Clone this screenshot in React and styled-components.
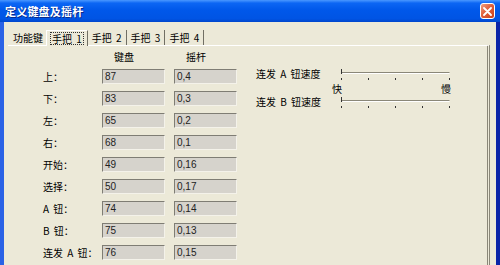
import React from 'react'
import styled, { createGlobalStyle } from 'styled-components'

const GlobalStyle = createGlobalStyle`
  html, body {
    margin: 0;
    padding: 0;
    width: 500px;
    height: 265px;
    overflow: hidden;
    background: #ECE9D8;
  }
  body {
    font-family: "Liberation Sans", "Noto Sans CJK SC", sans-serif;
    font-size: 10px;
    color: #000;
  }
`

// Styles
const Window = styled.div`
  width: 500px;
  height: 265px;
  display: flex;
  flex-direction: column;
  overflow: hidden;
`
const TitleBar = styled.div`
  height: 22px;
  flex: none;
  display: flex;
  align-items: center;
  padding-left: 5px;
  background: linear-gradient(#4A98FF 0%, #0C66F4 14%, #0058EA 45%, #0054E4 85%, #0046CC 100%);
`
const Title = styled.span`
  color: #fff;
  font-family: "Noto Sans CJK SC", sans-serif;
  font-size: 11px;
  font-weight: 700;
  letter-spacing: 0.2px;
  text-shadow: 1px 1px #0A2A8A;
`
const CloseButton = styled.div`
  margin-left: auto;
  margin-right: 5px;
  width: 15px;
  height: 16px;
  box-sizing: border-box;
  border: 1px solid #fff;
  border-radius: 3px;
  background: linear-gradient(135deg, #F0A080 0%, #E0603C 45%, #C8401C 100%);
  display: flex;
  align-items: center;
  justify-content: center;
`
const Frame = styled.div`
  flex: 1;
  display: flex;
  flex-direction: column;
  background: #ECE9D8;
  border-left: 4px solid #2A62E6;
  border-right: 4px solid #0A24A8;
  padding: 8px 6px 0 4px;
  min-height: 0;
`
const TabStrip = styled.div`
  display: flex;
  height: 15px;
  padding-left: 2px;
  position: relative;
  z-index: 1;
`
const Tab = styled.div`
  box-sizing: border-box;
  height: ${p => (p.$active ? '16px' : '15px')};
  padding: 0 ${p => (p.$plain ? '3px' : '4px')};
  display: flex;
  align-items: center;
  font-family: "Noto Sans CJK SC", sans-serif;
  font-size: 10px;
  white-space: pre;
  word-spacing: 2px;
  background: #ECE9D8;
  border-right: ${p => (p.$plain ? 'none' : '1px solid #716F64')};
  border-left: ${p => (p.$active ? '1px solid #fff' : 'none')};
  border-top: ${p => (p.$active ? '1px solid #fff' : 'none')};
`
const FocusBox = styled.span`
  outline: 1px dotted #333;
  padding: 0 1px;
  line-height: 11px;
`
const Panel = styled.div`
  flex: 1;
  display: flex;
  align-items: flex-start;
  border-top: 1px solid #fff;
  border-right: 3px double #8A8778;
  padding-left: 35px;
`
const KeyGrid = styled.div`
  margin-top: 4px;
  display: grid;
  grid-template-columns: 50px 63px 63px;
  grid-template-rows: 15px;
  grid-auto-rows: 22px;
  column-gap: 9px;
  align-items: center;
`
const ColHead = styled.div`
  padding-left: 12px;
  font-family: "Noto Sans CJK SC", sans-serif;
  font-size: 10px;
  align-self: start;
  line-height: 13px;
`
const KeyLabel = styled.div`
  font-family: "Noto Sans CJK SC", sans-serif;
  font-size: 10px;
  white-space: pre;
  word-spacing: 2px;
`
const Field = styled.div`
  height: 15px;
  box-sizing: border-box;
  border: 1px solid;
  border-color: #7F7D74 #F4F2EA #F4F2EA #7F7D74;
  background: #D6D3CC;
  padding-left: 2px;
  font-family: "Liberation Sans", sans-serif;
  font-size: 10px;
  line-height: 13px;
  color: #222;
`
const SpeedColumn = styled.div`
  margin-top: 20px;
  margin-left: 19px;
  display: flex;
  flex-direction: column;
`
const SpeedRow = styled.div`
  height: 16px;
  display: flex;
  align-items: flex-start;
`
const SpeedLabel = styled.div`
  width: 85px;
  line-height: 16px;
  font-family: "Noto Sans CJK SC", sans-serif;
  font-size: 10px;
  white-space: pre;
  word-spacing: 2px;
`
const ScaleRow = styled.div`
  height: 12px;
  width: 119px;
  margin-left: 76px;
  display: flex;
  justify-content: space-between;
  align-items: center;
  font-family: "Noto Sans CJK SC", sans-serif;
  font-size: 10px;
`

const rows = [
  ['上：', '87', '0,4'],
  ['下：', '83', '0,3'],
  ['左：', '65', '0,2'],
  ['右：', '68', '0,1'],
  ['开始：', '49', '0,16'],
  ['选择：', '50', '0,17'],
  ['A 钮：', '74', '0,14'],
  ['B 钮：', '75', '0,13'],
  ['连发 A 钮：', '76', '0,15'],
]

const Slider = () => (
  <svg width="110" height="16" viewBox="0 0 110 16">
    <line x1="0.5" y1="6.5" x2="108.5" y2="6.5" stroke="#8A8778" />
    <line x1="1.5" y1="7.5" x2="108.5" y2="7.5" stroke="#fff" />
    <line x1="0.5" y1="3" x2="0.5" y2="8" stroke="#333" />
    {[0, 27, 54, 81, 108].map(x => (
      <line key={x} x1={x + 0.5} y1="12" x2={x + 0.5} y2="14" stroke="#333" />
    ))}
  </svg>
)

const App = () => {
  return (
    <>
      <GlobalStyle />
      <Window>
        <TitleBar>
          <Title>定义键盘及摇杆</Title>
          <CloseButton>
            <svg width="9" height="9" viewBox="0 0 9 9">
              <path d="M1 1L8 8M8 1L1 8" stroke="#fff" strokeWidth="1.8" strokeLinecap="round" />
            </svg>
          </CloseButton>
        </TitleBar>
        <Frame>
          <TabStrip>
            <Tab $plain>功能键</Tab>
            <Tab $active><FocusBox>手把 1</FocusBox></Tab>
            <Tab>手把 2</Tab>
            <Tab>手把 3</Tab>
            <Tab>手把 4</Tab>
          </TabStrip>
          <Panel>
            <KeyGrid>
              <span />
              <ColHead>键盘</ColHead>
              <ColHead>摇杆</ColHead>
              {rows.map(([label, key, stick]) => (
                <React.Fragment key={label}>
                  <KeyLabel>{label}</KeyLabel>
                  <Field>{key}</Field>
                  <Field>{stick}</Field>
                </React.Fragment>
              ))}
            </KeyGrid>
            <SpeedColumn>
              <SpeedRow>
                <SpeedLabel>连发 A 钮速度</SpeedLabel>
                <Slider />
              </SpeedRow>
              <ScaleRow>
                <span>快</span>
                <span>慢</span>
              </ScaleRow>
              <SpeedRow>
                <SpeedLabel>连发 B 钮速度</SpeedLabel>
                <Slider />
              </SpeedRow>
            </SpeedColumn>
          </Panel>
        </Frame>
      </Window>
    </>
  )
}

export default App
